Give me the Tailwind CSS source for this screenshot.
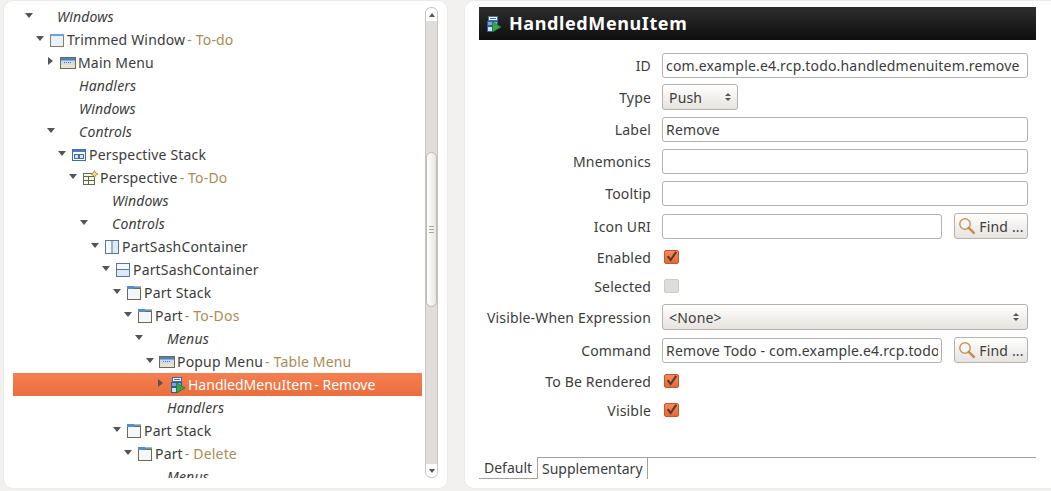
<!DOCTYPE html>
<html lang="en">
<head>
    <meta charset="UTF-8">
    <title>HandledMenuItem</title>
    <script src="https://cdn.jsdelivr.net/npm/@tailwindcss/browser@4"></script>
</head>
<body class="bg-[#f2f1f0] w-[1051px] h-[491px] overflow-hidden font-['Noto_Sans',sans-serif] text-[14px] tracking-[0.17px] text-[#3c3c3c]">

    <!-- Icons used by the tree and the header -->
    <svg class="hidden">
        <symbol id="i-window" viewBox="0 0 16 16">
            <rect x="1.5" y="2.5" width="13" height="12" fill="#e6f1f9" stroke="#857f62"/>
            <rect x="1" y="2" width="14" height="2" fill="#6ba3d6"/>
        </symbol>
        <symbol id="i-part" viewBox="0 0 16 16">
            <rect x="1.5" y="2.5" width="13" height="12" fill="#f1f7fb" stroke="#6f6a4e"/>
            <rect x="1" y="1" width="14" height="1.5" fill="#8fbbe2"/>
            <rect x="1" y="1" width="7" height="3" fill="#4f8fcb"/>
            <rect x="8" y="3" width="7" height="1" fill="#6f6a4e"/>
        </symbol>
        <symbol id="i-menu" viewBox="0 0 16 16">
            <rect x="0.5" y="2.5" width="15" height="11" fill="#cfdcf0" stroke="#6a6a55"/>
            <rect x="1" y="3" width="14" height="2.5" fill="#4f7fbc"/>
            <path d="M4 7.5h7" stroke="#5b6f95" stroke-dasharray="1 1"/>
            <rect x="1" y="10" width="14" height="3" fill="#e8e4c8"/>
        </symbol>
        <symbol id="i-stack" viewBox="0 0 16 16">
            <rect x="1.5" y="2.5" width="13" height="11" fill="#fff" stroke="#3f6ea8"/>
            <rect x="2" y="3" width="12" height="2" fill="#4f7fbc"/>
            <rect x="3.5" y="7.5" width="4" height="4" fill="#dbe6f5" stroke="#3f6ea8"/>
            <rect x="8.5" y="7.5" width="4" height="4" fill="#dbe6f5" stroke="#3f6ea8"/>
        </symbol>
        <symbol id="i-persp" viewBox="0 0 16 16">
            <rect x="1.5" y="3.5" width="11" height="11" fill="#f3f6e8" stroke="#5f6a50"/>
            <path d="M1.5 6.5h11M1.5 10.5h11M6.5 6.5v8" stroke="#5f6a50" fill="none"/>
            <path d="M12.5 0.5l1.2 2.3 2.3 1.2-2.3 1.2-1.2 2.3-1.2-2.3-2.3-1.2 2.3-1.2z" fill="#f2e08a" stroke="#8a7a30" stroke-width="0.7"/>
        </symbol>
        <symbol id="i-vsash" viewBox="0 0 16 16">
            <rect x="1.5" y="1.5" width="13" height="13" fill="#dfe9f6" stroke="#5a7797"/>
            <rect x="2" y="2" width="5.5" height="12" fill="#f4f8fc"/>
            <path d="M8 2v12" stroke="#5a7797"/>
        </symbol>
        <symbol id="i-hsash" viewBox="0 0 16 16">
            <rect x="1.5" y="1.5" width="13" height="13" fill="#dfe9f6" stroke="#5a7797"/>
            <rect x="2" y="2" width="12" height="5.5" fill="#f4f8fc"/>
            <path d="M2 7.5h12" stroke="#5a7797"/>
        </symbol>
        <symbol id="i-handled" viewBox="0 0 16 16">
            <rect x="2.5" y="0.5" width="9" height="4" fill="#f2f6fb" stroke="#3f6ea8"/>
            <path d="M4 2.5h6" stroke="#3f6ea8"/>
            <rect x="1.5" y="5.5" width="10" height="4" fill="#7ea6d8" stroke="#2f5d96"/>
            <rect x="1.5" y="10.5" width="5" height="5" fill="#cfe0f2" stroke="#2f5d96"/>
            <path d="M6.5 6l8.5 5-8.5 5z" fill="#3fa34d" stroke="#1e7a3a" stroke-width="0.8"/>
        </symbol>
        <symbol id="i-find" viewBox="0 0 18 18">
            <circle cx="7" cy="7" r="5.2" fill="#f4f7fa" stroke="#c9975c" stroke-width="1.5"/>
            <path d="M10.8 10.8l5 5" stroke="#c98a4a" stroke-width="2.6" stroke-linecap="round"/>
        </symbol>
        <symbol id="i-check" viewBox="0 0 14 14">
            <path d="M2.5 6l3.5 4.5 6.5-9.5" fill="none" stroke="#5a3a2c" stroke-width="2.4"/>
        </symbol>
    </svg>

    <div class="flex h-[489px]">
        <!-- Tree panel -->
        <section class="relative w-[445px] ml-[3px] h-full bg-white rounded-[10px] border border-[#ecebe9]">
            <div id="tree" class="absolute left-[9px] top-[4px] w-[409px] h-[473px] overflow-hidden"></div>
            <!-- Scrollbar -->
            <div class="absolute left-[421px] top-[6px] w-[13px] h-[471px] bg-[#e0ddda] border border-[#c9c6c2] rounded-[6px] flex flex-col">
                <div class="h-[13px] bg-white rounded-t-[6px] flex items-center justify-center">
                    <span class="w-0 h-0 border-x-[3.5px] border-x-transparent border-b-[4px] border-b-[#555]"></span>
                </div>
                <div class="h-[131px]"></div>
                <div class="h-[155px] bg-gradient-to-r from-white to-[#e9e7e5] border border-[#bdb9b4] rounded-[6px] flex flex-col items-center justify-center gap-[2px]">
                    <span class="w-[5px] h-px bg-[#a9a6a2]"></span>
                    <span class="w-[5px] h-px bg-[#a9a6a2]"></span>
                    <span class="w-[5px] h-px bg-[#a9a6a2]"></span>
                </div>
                <div class="flex-1"></div>
                <div class="h-[13px] bg-white rounded-b-[6px] flex items-center justify-center">
                    <span class="w-0 h-0 border-x-[3.5px] border-x-transparent border-t-[4px] border-t-[#555]"></span>
                </div>
            </div>
        </section>

        <!-- Details panel -->
        <section class="relative w-[587px] ml-[16px] h-full bg-white rounded-l-[10px] border border-r-0 border-[#ecebe9] pl-[14px] pt-[6px]">
            <header class="w-[557px] h-[33px] bg-gradient-to-b from-[#2e2e2e] to-[#0f0f0f] flex items-center pl-[7px] gap-[7px]">
                <svg class="w-[16px] h-[16px]"><use href="#i-handled"/></svg>
                <h1 class="text-white font-bold text-[18px] tracking-[0.6px]">HandledMenuItem</h1>
            </header>

            <div id="form" class="w-[549px]">
                <div class="flex items-center h-[26px] mt-[12px]">
                    <label class="w-[172px] text-right">ID</label>
                    <input class="ml-[11px] w-[366px] h-[25px] px-[3px] bg-white border border-[#b5b1ac] rounded-[3px] outline-none" value="com.example.e4.rcp.todo.handledmenuitem.remove">
                </div>
                <div class="flex items-center h-[26px] mt-[6px]">
                    <label class="w-[172px] text-right">Type</label>
                    <button class="ml-[11px] w-[76px] h-[26px] pl-[6px] pr-[6px] flex items-center justify-between bg-gradient-to-b from-white to-[#e6e3e0] border border-[#b5b1ac] rounded-[3px]">
                        <span>Push</span>
                        <span class="flex flex-col gap-[2px]">
                            <span class="w-0 h-0 border-x-[3px] border-x-transparent border-b-[3px] border-b-[#555]"></span>
                            <span class="w-0 h-0 border-x-[3px] border-x-transparent border-t-[3px] border-t-[#555]"></span>
                        </span>
                    </button>
                </div>
                <div class="flex items-center h-[26px] mt-[6px]">
                    <label class="w-[172px] text-right">Label</label>
                    <input class="ml-[11px] w-[366px] h-[25px] px-[3px] bg-white border border-[#b5b1ac] rounded-[3px] outline-none" value="Remove">
                </div>
                <div class="flex items-center h-[26px] mt-[6px]">
                    <label class="w-[172px] text-right">Mnemonics</label>
                    <input class="ml-[11px] w-[366px] h-[25px] px-[3px] bg-white border border-[#b5b1ac] rounded-[3px] outline-none">
                </div>
                <div class="flex items-center h-[26px] mt-[6px]">
                    <label class="w-[172px] text-right">Tooltip</label>
                    <input class="ml-[11px] w-[366px] h-[25px] px-[3px] bg-white border border-[#b5b1ac] rounded-[3px] outline-none">
                </div>
                <div class="flex items-center h-[26px] mt-[7px]">
                    <label class="w-[172px] text-right">Icon URI</label>
                    <input class="ml-[11px] w-[280px] h-[25px] px-[3px] bg-white border border-[#b5b1ac] rounded-[3px] outline-none">
                    <button class="ml-[12px] w-[74px] h-[26px] flex items-center justify-center gap-[3px] bg-gradient-to-b from-white to-[#e6e3e0] border border-[#b5b1ac] rounded-[3px]">
                        <svg class="w-[18px] h-[18px]"><use href="#i-find"/></svg><span>Find ...</span>
                    </button>
                </div>
                <div class="flex items-center h-[26px] mt-[5px]">
                    <label class="w-[172px] text-right">Enabled</label>
                    <span class="ml-[13px] w-[15px] h-[14px] rounded-[2px] bg-gradient-to-b from-[#f58a5c] to-[#e46a38] border border-[#c9562a]">
                        <svg class="w-[13px] h-[12px] overflow-visible"><use href="#i-check"/></svg>
                    </span>
                </div>
                <div class="flex items-center h-[26px] mt-[3px]">
                    <label class="w-[172px] text-right">Selected</label>
                    <span class="ml-[13px] w-[15px] h-[14px] rounded-[2px] bg-[#dfdcd9] border border-[#cfccc8]"></span>
                </div>
                <div class="flex items-center h-[26px] mt-[5px]">
                    <label class="w-[172px] text-right">Visible-When Expression</label>
                    <button class="ml-[11px] w-[366px] h-[26px] pl-[6px] pr-[8px] flex items-center justify-between bg-gradient-to-b from-white to-[#e6e3e0] border border-[#b5b1ac] rounded-[3px]">
                        <span>&lt;None&gt;</span>
                        <span class="flex flex-col gap-[2px]">
                            <span class="w-0 h-0 border-x-[3px] border-x-transparent border-b-[3px] border-b-[#555]"></span>
                            <span class="w-0 h-0 border-x-[3px] border-x-transparent border-t-[3px] border-t-[#555]"></span>
                        </span>
                    </button>
                </div>
                <div class="flex items-center h-[26px] mt-[7px]">
                    <label class="w-[172px] text-right">Command</label>
                    <input class="ml-[11px] w-[280px] h-[25px] px-[3px] bg-white border border-[#b5b1ac] rounded-[3px] outline-none" value="Remove Todo - com.example.e4.rcp.todo">
                    <button class="ml-[12px] w-[74px] h-[26px] flex items-center justify-center gap-[3px] bg-gradient-to-b from-white to-[#e6e3e0] border border-[#b5b1ac] rounded-[3px]">
                        <svg class="w-[18px] h-[18px]"><use href="#i-find"/></svg><span>Find ...</span>
                    </button>
                </div>
                <div class="flex items-center h-[26px] mt-[5px]">
                    <label class="w-[172px] text-right">To Be Rendered</label>
                    <span class="ml-[13px] w-[15px] h-[14px] rounded-[2px] bg-gradient-to-b from-[#f58a5c] to-[#e46a38] border border-[#c9562a]">
                        <svg class="w-[13px] h-[12px] overflow-visible"><use href="#i-check"/></svg>
                    </span>
                </div>
                <div class="flex items-center h-[26px] mt-[3px]">
                    <label class="w-[172px] text-right">Visible</label>
                    <span class="ml-[13px] w-[15px] h-[14px] rounded-[2px] bg-gradient-to-b from-[#f58a5c] to-[#e46a38] border border-[#c9562a]">
                        <svg class="w-[13px] h-[12px] overflow-visible"><use href="#i-check"/></svg>
                    </span>
                </div>
            </div>

            <!-- Bottom tabs -->
            <nav class="absolute left-[14px] top-[456px] w-[557px] h-[22px] flex tracking-normal">
                <span class="w-[58px] pl-[5px] pb-[1px] flex items-center border-b border-[#a5a19c]">Default</span>
                <span class="w-[111px] pl-[4px] flex items-center bg-white border-x border-t border-[#a5a19c]">Supplementary</span>
                <span class="flex-1 border-t border-[#a5a19c]"></span>
            </nav>
        </section>
    </div>

    <script>
        // level, expander (d down, r right, none), icon, name, decoration, italic
        const rows = [
            { level: 0, arrow: 'd', text: 'Windows', italic: true },
            { level: 1, arrow: 'd', icon: 'window', text: 'Trimmed Window', deco: 'To-do' },
            { level: 2, arrow: 'r', icon: 'menu', text: 'Main Menu' },
            { level: 2, text: 'Handlers', italic: true },
            { level: 2, text: 'Windows', italic: true },
            { level: 2, arrow: 'd', text: 'Controls', italic: true },
            { level: 3, arrow: 'd', icon: 'stack', text: 'Perspective Stack' },
            { level: 4, arrow: 'd', icon: 'persp', text: 'Perspective', deco: 'To-Do' },
            { level: 5, text: 'Windows', italic: true },
            { level: 5, arrow: 'd', text: 'Controls', italic: true },
            { level: 6, arrow: 'd', icon: 'vsash', text: 'PartSashContainer' },
            { level: 7, arrow: 'd', icon: 'hsash', text: 'PartSashContainer' },
            { level: 8, arrow: 'd', icon: 'part', text: 'Part Stack' },
            { level: 9, arrow: 'd', icon: 'part', text: 'Part', deco: 'To-Dos' },
            { level: 10, arrow: 'd', text: 'Menus', italic: true },
            { level: 11, arrow: 'd', icon: 'menu', text: 'Popup Menu', deco: 'Table Menu' },
            { level: 12, arrow: 'r', icon: 'handled', text: 'HandledMenuItem', deco: 'Remove', selected: true },
            { level: 10, text: 'Handlers', italic: true },
            { level: 8, arrow: 'd', icon: 'part', text: 'Part Stack' },
            { level: 9, arrow: 'd', icon: 'part', text: 'Part', deco: 'Delete' },
            { level: 10, text: 'Menus', italic: true }
        ];

        const arrows = {
            d: '<span class="block w-0 h-0 mt-[-3px] ml-[2px] border-x-[4px] border-x-transparent border-t-[5px] border-t-[#555]"></span>',
            r: '<span class="block w-0 h-0 mt-[-3px] ml-[3px] border-y-[4px] border-y-transparent border-l-[5px] border-l-[#555]"></span>'
        };

        let html = '';
        rows.forEach((row) => {
            const rowClass = row.selected
                ? 'bg-gradient-to-b from-[#f57f50] to-[#ea6e3e] text-white tracking-normal'
                : 'text-[#3c3c3c]';
            const decoClass = row.selected ? 'text-white' : 'text-[#a98c55]';
            const icon = row.icon
                ? `<svg class="w-[16px] h-[16px] mr-[2px] shrink-0"><use href="#i-${row.icon}"/></svg>`
                : '<span class="w-[19px] shrink-0"></span>';
            const deco = row.deco ? `<span class="${decoClass} ml-[2px]">- ${row.deco}</span>` : '';
            html += `
                <div class="flex items-center h-[23px] whitespace-nowrap ${rowClass}" style="padding-left:${10 + row.level * 11}px">
                    <span class="w-[15px] shrink-0 flex items-center">${row.arrow ? arrows[row.arrow] : ''}</span>
                    ${icon}
                    <span class="${row.italic ? 'italic' : ''}">${row.text}</span>${deco}
                </div>`;
        });
        document.getElementById('tree').innerHTML = html;
    </script>
</body>
</html>
